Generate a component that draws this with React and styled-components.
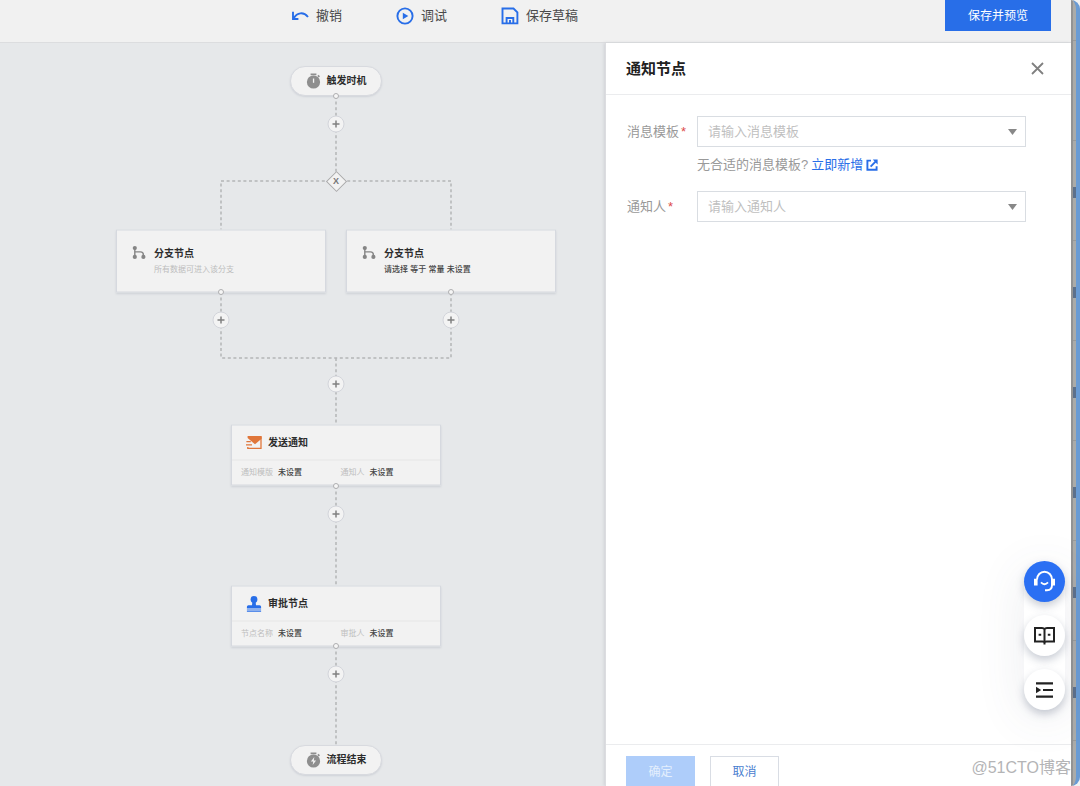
import React from 'react'
import styled, { createGlobalStyle } from 'styled-components'

const blue = '#286ee8'

const GlobalStyle = createGlobalStyle`
  * {
    box-sizing: border-box;
  }
  body {
    margin: 0;
    background: #f1f1f1;
    font-family: 'Liberation Sans', 'Noto Sans CJK SC', sans-serif;
    font-size: 13px;
    line-height: 18px;
    color: #444;
  }
  button, select {
    font-family: inherit;
    font-size: inherit;
    line-height: inherit;
    margin: 0;
    padding: 0;
    cursor: pointer;
  }
`

const Shell = styled.div`
  position: relative;
  display: flex;
  height: 100vh;
  overflow: hidden;
`

const Page = styled.div`
  flex: 1;
  min-width: 0;
  display: flex;
  flex-direction: column;
`

const Header = styled.header`
  display: flex;
  justify-content: space-between;
  align-items: flex-start;
  padding: 0 20px 11px 291px;
  background: #f1f1f1;
  border-bottom: 1px solid #dcdddf;
`

const Tools = styled.nav`
  display: flex;
  align-items: center;
  gap: 54px;
  height: 31px;
`

const Tool = styled.button`
  display: flex;
  align-items: center;
  gap: 7px;
  border: 0;
  background: none;
  color: #4a4a4a;
`

const Button = styled.button`
  width: ${props => props.$width};
  height: 31px;
  border: 1px solid ${props => props.$border};
  background: ${props => props.$bg};
  font-size: 12px;
  color: ${props => props.$color};
`

const Workspace = styled.div`
  flex: 1;
  min-height: 0;
  display: flex;
`

const Canvas = styled.main`
  position: relative;
  flex: 1;
  min-width: 0;
  overflow: hidden;
  background: #e6e8ea;
`

const Lines = styled.svg`
  position: absolute;
  top: 0;
  left: 0;
  width: 606px;
  height: 743px;
  fill: none;
  stroke: #b4b5b7;
  stroke-width: 1.5;
  stroke-dasharray: 3 2.6;
`

// Nodes are placed by their centre on the free canvas
const Node = styled.div`
  position: absolute;
  left: ${props => props.$x}px;
  top: ${props => props.$y}px;
  transform: translate(-50%, -50%);
`

const Pill = styled.div`
  display: flex;
  align-items: center;
  justify-content: center;
  gap: 6px;
  width: 92px;
  height: 30px;
  border: 1px solid #d8dadf;
  border-radius: 15px;
  background: #f2f2f2;
  box-shadow: 0 1px 2px #cfd2d8;
`

const NodeTitle = styled.strong`
  font-size: 10px;
  line-height: 16px;
  font-weight: 700;
  color: #2c2c2c;
  white-space: nowrap;
`

const Card = styled.div`
  width: 210px;
  border: 1px solid #d6d9df;
  background: #f2f2f2;
  box-shadow: 0 1px 2px #cdd0d7;
`

const BranchBody = styled.div`
  display: flex;
  gap: 8px;
  height: 61px;
  padding: 15px;
`

const BranchText = styled.div`
  display: flex;
  flex-direction: column;
`

const Small = styled.span`
  font-size: 8px;
  line-height: 16px;
  font-weight: ${props => (props.$strong ? 500 : 400)};
  color: ${props => (props.$strong ? '#444' : '#bdbdbd')};
  white-space: nowrap;
`

const CardHead = styled.div`
  display: flex;
  align-items: center;
  gap: 6px;
  height: 35px;
  padding: 0 14px;
  border-bottom: 1px solid #e5e5e6;
`

const CardRow = styled.div`
  display: grid;
  grid-template-columns: 1fr 1fr;
  align-items: center;
  height: 24px;
  padding: 0 0 0 9px;
`

const Pair = styled.div`
  display: flex;
  gap: 5px;
`

const Add = styled.button`
  display: flex;
  align-items: center;
  justify-content: center;
  width: 17px;
  height: 17px;
  border: 1px solid #d3d5db;
  border-radius: 50%;
  background: #f3f3f3;
`

const Port = styled.i`
  display: block;
  width: 6px;
  height: 6px;
  border: 1px solid #aeaeb0;
  border-radius: 50%;
  background: #f6f6f6;
`

const Gateway = styled.div`
  display: grid;
  place-items: center;
  width: 20px;
  height: 20px;
  font-size: 9px;
  line-height: 10px;
  font-weight: 700;
  color: #777;

  &::before,
  span {
    grid-area: 1 / 1;
  }
  &::before {
    content: '';
    width: 13px;
    height: 13px;
    border: 1px solid #a9a9ab;
    background: #f2f2f2;
    transform: rotate(45deg);
  }
  span {
    z-index: 1;
  }
`

const Panel = styled.aside`
  display: flex;
  flex-direction: column;
  width: 466px;
  background: #fff;
  border-left: 1px solid #dcdde0;
  box-shadow: -1px 0 3px #cfd1d5;
  z-index: 1;
`

const PanelHead = styled.div`
  display: flex;
  align-items: center;
  justify-content: space-between;
  height: 52px;
  padding: 0 27px 0 20px;
  border-bottom: 1px solid #ebecee;
`

const PanelTitle = styled.h2`
  margin: 0;
  font-size: 15px;
  line-height: 20px;
  font-weight: 700;
  color: #222;
`

const Close = styled.button`
  display: flex;
  border: 0;
  background: none;
`

const Form = styled.form`
  flex: 1;
  display: grid;
  grid-template-columns: 70px 1fr;
  align-content: start;
  padding: 21px 45px 0 21px;
`

const Label = styled.label`
  line-height: 31px;
  color: #999;

  span {
    margin-left: 2px;
    color: #dd4b4b;
  }
`

const SelectBox = styled.div`
  display: grid;
  align-items: center;

  select,
  svg {
    grid-area: 1 / 1;
  }
  svg {
    justify-self: end;
    margin-right: 9px;
    pointer-events: none;
  }
`

const Select = styled.select`
  appearance: none;
  width: 100%;
  height: 31px;
  padding: 0 30px 0 10px;
  border: 1px solid #d9dde2;
  border-radius: 0;
  background: #fff;
  color: #bfbfbf;
`

const Help = styled.div`
  grid-column: 2;
  display: flex;
  align-items: center;
  gap: 3px;
  padding: 9px 0 17px;
  color: #999;

  a {
    display: flex;
    align-items: center;
    gap: 3px;
    color: ${blue};
    text-decoration: none;
  }
`

const PanelFoot = styled.div`
  display: flex;
  gap: 15px;
  padding: 11px 20px 0;
  height: 42px;
  border-top: 1px solid #ebecee;
`

const FloatBar = styled.div`
  position: absolute;
  z-index: 2;
  right: 15px;
  bottom: 76px;
  display: flex;
  flex-direction: column;
  gap: 13px;
  border-radius: 21px;
  box-shadow: 0 8px 50px rgba(70, 80, 110, 0.11);
`

const Float = styled.button`
  display: flex;
  align-items: center;
  justify-content: center;
  width: 41px;
  height: 41px;
  border: 0;
  border-radius: 50%;
  background: ${props => (props.$primary ? '#2a6ff3' : '#fff')};
  box-shadow: 0 4px 9px rgba(60, 75, 105, 0.28);
`

const Watermark = styled.div`
  position: absolute;
  z-index: 3;
  right: 9px;
  bottom: 8px;
  font-size: 16px;
  line-height: 20px;
  color: #b4b4b6;
`

// Strip of the window behind, seen along the right edge
const Edge = styled.div`
  display: flex;
  flex-direction: column;
  gap: 89px;
  width: 9px;
  padding-top: 187px;
  border-left: 2px solid #929394;
  border-right: 4px solid #699bd4;
  border-radius: 0 9px 9px 0;
  background: repeating-linear-gradient(#aaaba9 0 40px, #989998 40px 41px, #aaaba9 41px 100px);
  z-index: 1;
`

const EdgeMark = styled.i`
  height: 11px;
  background: #5c708b;
`

const UndoIcon = () => (
  <svg width="18" height="18" viewBox="0 0 18 18" fill="none" stroke={blue} strokeWidth="1.9">
    <path d="M2 4.800V12H7.400M2.600 11.400C6.200 5.200 12.600 4.600 17 10" />
  </svg>
)

const PlayIcon = () => (
  <svg width="18" height="18" viewBox="0 0 18 18">
    <circle cx="9" cy="9" r="7.6" fill="none" stroke={blue} strokeWidth="1.9" />
    <path d="M6.8 5.8v6.4L12.3 9z" fill={blue} />
  </svg>
)

const SaveIcon = () => (
  <svg width="18" height="18" viewBox="0 0 18 18" fill="none" stroke={blue} strokeWidth="1.9">
    <path d="M1.5 1.5H12.5L16.4 5.4V16.4H1.5zM5.6 16V11H12.3V16M9 13v3" />
  </svg>
)

const TimerIcon = ({ bolt }) => (
  <svg width="15" height="16" viewBox="0 0 15 16">
    <path d="M4.600 .4h5.800v1.900H4.600zM11.3 3l1.200-1.200 1.500 1.500-1.200 1.200z" fill="#8e8e8e" />
    <circle cx="7.5" cy="9" r="6.6" fill="#8e8e8e" />
    {bolt ? (
      <path d="M8.3 5L4.9 9.6h2.3L6.7 13l3.4-4.6H7.8z" fill="#f2f2f2" />
    ) : (
      <path d="M6.9 5.5h1.3v4.3H6.9z" fill="#f2f2f2" />
    )}
  </svg>
)

const BranchIcon = () => (
  <svg width="14" height="14" viewBox="0 0 14 14" fill="#858585">
    <circle cx="2.8" cy="2.6" r="2.1" />
    <circle cx="2.8" cy="11.4" r="2.1" />
    <circle cx="11.4" cy="11.4" r="2.1" />
    <path d="M2.8 2.6V11M2.8 6.4H8.5Q11.4 6.4 11.4 9.4V11" fill="none" stroke="#858585" strokeWidth="1.4" />
  </svg>
)

const MailIcon = () => (
  <svg width="16" height="14" viewBox="0 0 16 14" fill="none" stroke="#e0763a">
    <path d="M1.6 .6H15.6V3.2L9 8.800 1.600 2.600z" fill="#e0763a" stroke="none" />
    <path d="M15 1V12.800H1.800V11.400" strokeWidth="1.3" />
    <path d="M.4 6.200h4.400M0 9.400h6" strokeWidth="1.2" />
  </svg>
)

const StampIcon = () => (
  <svg width="16" height="17" viewBox="0 0 16 17" fill={blue}>
    <circle cx="8" cy="4" r="3.4" />
    <path d="M6.4 6h3.2L10 9.8h3.6q1.5 0 1.5 1.5V13H.9v-1.7q0-1.5 1.5-1.5H6z" />
    <path d="M.9 14h14.2v.9H.9zM.9 15.7h14.2v.9H.9z" />
  </svg>
)

const Caret = () => (
  <svg width="9" height="6" viewBox="0 0 9 6">
    <path d="M0 0h9L4.5 6z" fill="#888" />
  </svg>
)

const LinkIcon = () => (
  <svg width="12" height="12" viewBox="0 0 12 12" fill="none" stroke={blue} strokeWidth="1.9">
    <path d="M5 1.6H1.4v9.2h9.2V7.2M4.6 7.6L10 2.2" />
    <path d="M6.800 .6h4.800v4.800z" fill={blue} stroke="none" />
  </svg>
)

const HeadsetIcon = () => (
  <svg width="23" height="23" viewBox="0 0 23 23" fill="none" stroke="#fff">
    <path d="M4 9.5a7.5 7.8 0 0 1 15 0V15q0 5.2-5 5.2h-2" strokeWidth="1.9" />
    <path d="M2.8 8.800v6.800M20.2 8.800v6.800" strokeWidth="3.600" />
    <path d="M8 12.4q3.5 3.6 7 0" strokeWidth="1.9" />
  </svg>
)

const BookIcon = () => (
  <svg width="23" height="19" viewBox="0 0 23 19" fill="none" stroke="#222" strokeWidth="2">
    <path d="M11.5 3.2Q10.8 2 9 2H2v13.4h7.4q2.1 0 2.1 1.4 0-1.4 2.1-1.4H21V2h-7q-1.8 0-2.5 1.2zM11.5 3v15.6" />
    <path d="M5.6 8.8h2.6M14.8 8.8h2.6" />
  </svg>
)

const ListIcon = () => (
  <svg width="19" height="18" viewBox="0 0 19 18">
    <path d="M1 2.4h17M8 9h10M1 15.6h17" stroke="#222" strokeWidth="2.1" />
    <path d="M1 5.8v6.4L6.2 9z" fill="#222" />
  </svg>
)

const Branch = ({ x, text, strong }) => (
  <Node $x={x} $y={218}>
    <Card>
      <BranchBody>
        <BranchIcon />
        <BranchText>
          <NodeTitle>分支节点</NodeTitle>
          <Small $strong={strong}>{text}</Small>
        </BranchText>
      </BranchBody>
    </Card>
  </Node>
)

const Step = ({ y, icon, title, fields }) => (
  <Node $x={336} $y={y}>
    <Card>
      <CardHead>
        {icon}
        <NodeTitle>{title}</NodeTitle>
      </CardHead>
      <CardRow>
        {fields.map(field => (
          <Pair key={field}>
            <Small>{field}</Small>
            <Small $strong>未设置</Small>
          </Pair>
        ))}
      </CardRow>
    </Card>
  </Node>
)

const adds = [[336, 81], [221, 277], [451, 277], [336, 341], [336, 471], [336, 631]]
const ports = [[336, 53], [221, 249], [451, 249], [336, 443], [336, 603]]

const Flow = () => (
  <Canvas>
    <Lines>
      <path d="M336 53V138M336 138H221V187M336 138H451V187" />
      <path d="M221 249V315H451V249M336 315V382" />
      <path d="M336 443V542M336 603V702" />
    </Lines>
    <Node $x={336} $y={38}>
      <Pill>
        <TimerIcon />
        <NodeTitle>触发时机</NodeTitle>
      </Pill>
    </Node>
    <Node $x={336} $y={138}>
      <Gateway>
        <span>X</span>
      </Gateway>
    </Node>
    <Branch x={221} text="所有数据可进入该分支" />
    <Branch x={451} text="请选择 等于 常量 未设置" strong />
    <Step y={412} icon={<MailIcon />} title="发送通知" fields={['通知模版', '通知人']} />
    <Step y={573} icon={<StampIcon />} title="审批节点" fields={['节点名称', '审批人']} />
    <Node $x={336} $y={717}>
      <Pill>
        <TimerIcon bolt />
        <NodeTitle>流程结束</NodeTitle>
      </Pill>
    </Node>
    {ports.map(([x, y]) => (
      <Node key={`${x}-${y}`} $x={x} $y={y}>
        <Port />
      </Node>
    ))}
    {adds.map(([x, y]) => (
      <Node key={`${x}-${y}`} $x={x} $y={y}>
        <Add aria-label="添加节点">
          <svg width="9" height="9" viewBox="0 0 9 9" stroke="#808080" strokeWidth="1.5">
            <path d="M4.5 1v7M1 4.5h7" />
          </svg>
        </Add>
      </Node>
    ))}
  </Canvas>
)

const Field = ({ id, label, placeholder }) => (
  <>
    <Label htmlFor={id}>
      {label}
      <span>*</span>
    </Label>
    <SelectBox>
      <Select id={id}>
        <option>{placeholder}</option>
      </Select>
      <Caret />
    </SelectBox>
  </>
)

const NoticePanel = () => (
  <Panel>
    <PanelHead>
      <PanelTitle>通知节点</PanelTitle>
      <Close aria-label="关闭">
        <svg width="13" height="13" viewBox="0 0 13 13" stroke="#808080" strokeWidth="1.8">
          <path d="M1 1l11 11M12 1L1 12" />
        </svg>
      </Close>
    </PanelHead>
    <Form>
      <Field id="template" label="消息模板" placeholder="请输入消息模板" />
      <Help>
        无合适的消息模板?
        <a href="#new">
          立即新增
          <LinkIcon />
        </a>
      </Help>
      <Field id="receiver" label="通知人" placeholder="请输入通知人" />
    </Form>
    <PanelFoot>
      <Button $width="69px" $bg="#aecdfa" $border="#aecdfa" $color="#e4effd">
        确定
      </Button>
      <Button $width="69px" $bg="#fff" $border="#d9dde4" $color="#4a80cf">
        取消
      </Button>
    </PanelFoot>
  </Panel>
)

const App = () => (
  <Shell>
    <GlobalStyle />
    <Page>
      <Header>
        <Tools>
          <Tool>
            <UndoIcon />
            撤销
          </Tool>
          <Tool>
            <PlayIcon />
            调试
          </Tool>
          <Tool>
            <SaveIcon />
            保存草稿
          </Tool>
        </Tools>
        <Button $width="106px" $bg={blue} $border={blue} $color="#fff">
          保存并预览
        </Button>
      </Header>
      <Workspace>
        <Flow />
        <NoticePanel />
      </Workspace>
    </Page>
    <Edge>
      {[0, 1, 2, 3, 4, 5].map(n => (
        <EdgeMark key={n} />
      ))}
    </Edge>
    <FloatBar>
      <Float $primary aria-label="客服">
        <HeadsetIcon />
      </Float>
      <Float aria-label="文档">
        <BookIcon />
      </Float>
      <Float aria-label="展开">
        <ListIcon />
      </Float>
    </FloatBar>
    <Watermark>@51CTO博客</Watermark>
  </Shell>
)

export default App
